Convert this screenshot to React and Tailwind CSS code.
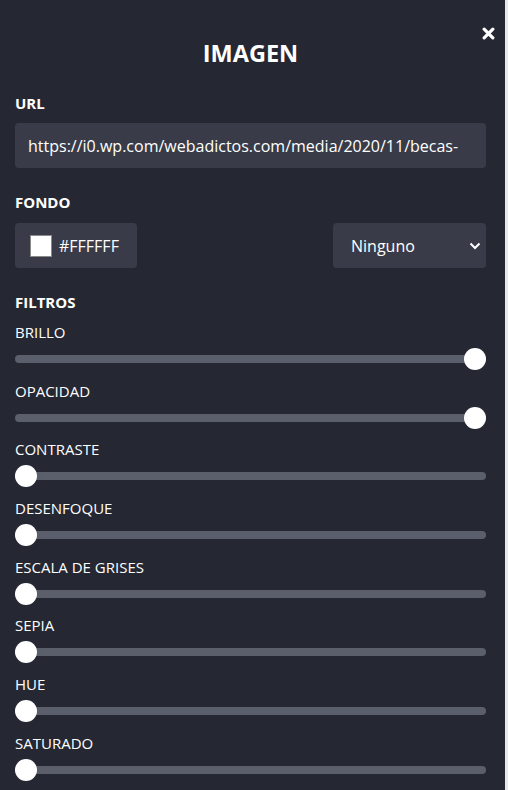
import React from "react";

const filters = [
  { name: "BRILLO", value: 100 },
  { name: "OPACIDAD", value: 100 },
  { name: "CONTRASTE", value: 0 },
  { name: "DESENFOQUE", value: 0 },
  { name: "ESCALA DE GRISES", value: 0 },
  { name: "SEPIA", value: 0 },
  { name: "HUE", value: 0 },
  { name: "SATURADO", value: 0 },
];

function Slider({ value }) {
  return (
    <div className="relative h-[22px] flex items-center">
      <div className="h-[8px] w-full rounded-full bg-[#5b5e6b]" />
      <div
        className="absolute top-0 h-[22px] w-[22px] rounded-full bg-white"
        style={{ left: `calc(${value}% - ${(value / 100) * 22}px)` }}
      />
    </div>
  );
}

export default function App() {
  return (
    <div className="flex h-[790px] w-[508px] bg-[#e8e8e8]" style={{ fontFamily: '"Open Sans", sans-serif' }}>
      <div className="relative h-full w-[505px] overflow-hidden bg-[#252833] pl-[15px] pr-[19px] text-white">
        <button className="absolute right-[10px] top-[27px] text-white">
          <svg width="13" height="13" viewBox="0 0 12 12">
            <path d="M2 2 L10 10 M10 2 L2 10" stroke="white" strokeWidth="3" strokeLinecap="round" />
          </svg>
        </button>
        <h1 className="pt-[35px] text-center text-[23.5px] font-bold leading-[36px]">IMAGEN</h1>

        <div className="mt-[22px] text-[15px] font-bold leading-[20px]">URL</div>
        <div className="mt-[10px] flex h-[45px] items-center overflow-hidden rounded-[4px] bg-[#393c48] pl-[13px] text-[16px] whitespace-nowrap">
          https://i0.wp.com/webadictos.com/media/2020/11/becas-
        </div>

        <div className="mt-[24px] text-[15px] font-bold leading-[20px]">FONDO</div>
        <div className="mt-[11px] flex justify-between">
          <div className="flex h-[45px] w-[122px] items-center gap-[7px] rounded-[4px] bg-[#393c48] pl-[15px]">
            <span className="h-[22px] w-[22px] border border-[#8a8a8a] bg-white" />
            <span className="text-[16px]">#FFFFFF</span>
          </div>
          <div className="flex h-[45px] w-[153px] items-center justify-between rounded-[4px] bg-[#393c48] pl-[18px] pr-[5px]">
            <span className="text-[16px]">Ninguno</span>
            <svg width="12" height="8" viewBox="0 0 12 8">
              <path d="M1.5 1.5 L6 6 L10.5 1.5" fill="none" stroke="white" strokeWidth="2" />
            </svg>
          </div>
        </div>

        <div className="mt-[24px] text-[15px] font-bold leading-[20px]">FILTROS</div>
        <div className="mt-[10px] flex flex-col gap-[10.7px]">
          {filters.map((f) => (
            <div key={f.name} className="flex flex-col gap-[6px]">
              <div className="text-[15px] leading-[20px]">{f.name}</div>
              <Slider value={f.value} />
            </div>
          ))}
        </div>
      </div>
    </div>
  );
}
